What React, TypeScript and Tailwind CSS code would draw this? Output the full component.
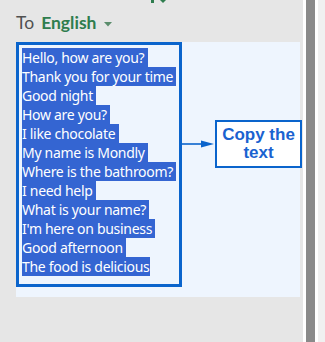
import React from "react";

const phrases = [
  "Hello, how are you?",
  "Thank you for your time",
  "Good night",
  "How are you?",
  "I like chocolate",
  "My name is Mondly",
  "Where is the bathroom?",
  "I need help",
  "What is your name?",
  "I'm here on business",
  "Good afternoon",
  "The food is delicious",
];

export default function App() {
  return (
    <div className="flex h-[342px] w-[325px] overflow-hidden">
      <div className="w-[303px] shrink-0 bg-[#e6e6e6]">
        {/* tail of the row above, cut off by the window */}
        <div className="flex h-[3px] items-start">
          <div className="ml-[151px] h-[3px] w-[3px] bg-[#2f7d4e]" />
          <svg className="ml-[6px]" width="6" height="3" viewBox="0 0 6 3">
            <path d="M0 0 L6 0 L3 3 Z" fill="#2f7d4e" />
          </svg>
        </div>

        <div
          className="mt-[8px] flex items-center pl-[16px] text-[17.5px] leading-[24px]"
          style={{ fontFamily: "Lato, \"Noto Sans\", sans-serif" }}
        >
          <span className="text-[#505050]">To</span>
          <span className="ml-[7px] font-bold text-[#2f7d4e]">English</span>
          <svg className="ml-[8px] mt-[2px]" width="8" height="5" viewBox="0 0 8 5">
            <path d="M0 0 L8 0 L4 4.5 Z" fill="#5b8d6c" />
          </svg>
        </div>

        <div className="ml-[16px] mt-[7px] flex h-[255px] w-[284px] items-start bg-[#eef5fe]">
          <div className="h-[245px] w-[166px] shrink-0 border-[3px] border-[#0a64cc] pl-[3px] pt-[3px]">
            <div
              className="text-[14px] leading-[19px] tracking-[-0.3px] text-white"
              style={{ fontFamily: "\"Noto Sans\", \"Open Sans\", sans-serif" }}
            >
              {phrases.map((p, i) => (
                <div key={i} className="w-fit whitespace-pre bg-[#3465d2]">
                  {i < phrases.length - 1 ? p + " " : p}
                </div>
              ))}
            </div>
          </div>

          <div className="mt-[78px] flex items-center">
            <svg width="33" height="10" viewBox="0 0 33 10">
              <line x1="0" y1="5" x2="22" y2="5" stroke="#0a64cc" strokeWidth="1.6" />
              <path d="M19 1.5 L32 5 L19 8.5 Z" fill="#0a64cc" />
            </svg>
            <div
              className="-mr-[2px] flex h-[48px] w-[87px] flex-col items-center justify-center border-2 border-[#0a64cc] bg-white text-center text-[17px] font-bold leading-[18px] text-[#1a62d0]"
              style={{ fontFamily: '"Liberation Sans", Arial, sans-serif' }}
            >
              <span>Copy the</span>
              <span>text</span>
            </div>
          </div>
        </div>
      </div>
      <div className="w-[3px] shrink-0 bg-white" />
      <div className="w-[9px] shrink-0 bg-[#8a8a8a]" />
      <div className="w-[3px] shrink-0 bg-white" />
      <div className="flex-1 bg-[#f0f0f0]" />
    </div>
  );
}
